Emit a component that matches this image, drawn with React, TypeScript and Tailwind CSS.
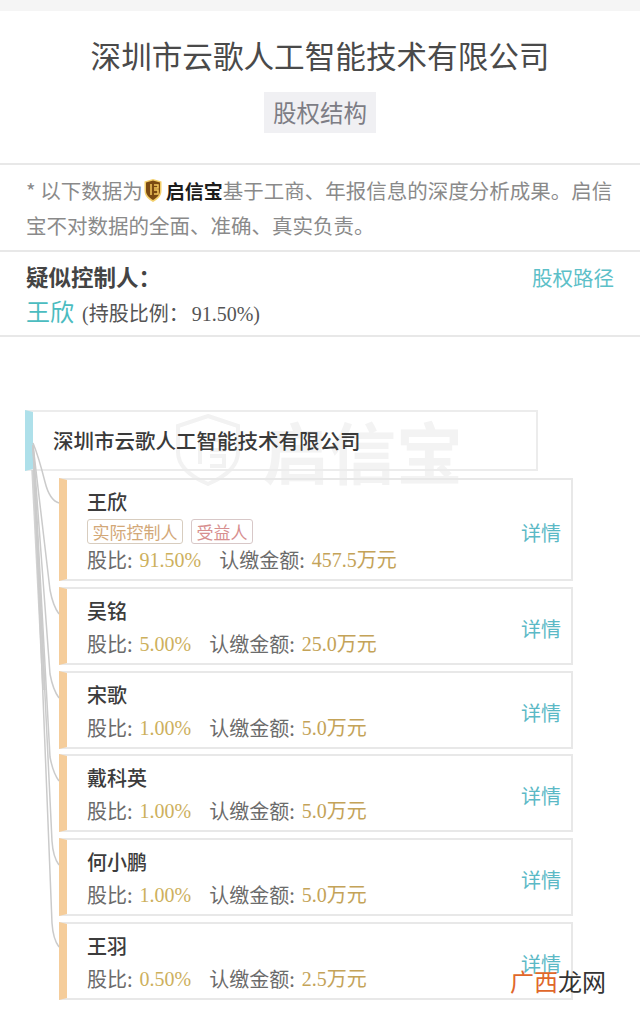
const cjk = "font-['Noto_Sans_CJK_SC','Noto_Sans',sans-serif]";

const holders = [
  {name: "王欣", ratio: "91.50%", amount: "457.5万元", tags: true, height: "h-[103px]", lineY: 503},
  {name: "吴铭", ratio: "5.00%", amount: "25.0万元", tags: false, height: "h-[78px]", lineY: 614},
  {name: "宋歌", ratio: "1.00%", amount: "5.0万元", tags: false, height: "h-[78px]", lineY: 698},
  {name: "戴科英", ratio: "1.00%", amount: "5.0万元", tags: false, height: "h-[78px]", lineY: 781},
  {name: "何小鹏", ratio: "1.00%", amount: "5.0万元", tags: false, height: "h-[78px]", lineY: 865},
  {name: "王羽", ratio: "0.50%", amount: "2.5万元", tags: false, height: "h-[78px]", lineY: 947}
];

const ShieldLogo = () => (
  <svg width="20" height="25" viewBox="0 0 20 25" className="shrink-0">
    <path d="M10 1 L18.5 3.5 V13 C18.5 18 14.500 21.500 10 24 C5.500 21.500 1.500 18 1.500 13 V3.500 Z" fill="#f3cf6b" />
    <path d="M10 2.500 L17 4.500 V13 C17 17 13.500 20 10 22 C6.500 20 3 17 3 13 V4.500 Z" fill="#7a4a12" />
    <path d="M8 6 V17 M11 7 H15 V10 H11 M11 12 H15 V16 H11" stroke="#f3c85e" strokeWidth="1.500" fill="none" />
  </svg>
);

const WatermarkLogo = () => (
  <div className="absolute left-[176px] top-[414px] flex items-center gap-[22px] text-[#f3f3f3]">
    <svg width="64" height="72" viewBox="0 0 64 72">
      <path d="M32 2 L62 12 V38 C62 54 46 64 32 70 C18 64 2 54 2 38 V12 Z" fill="none" stroke="#f2f2f2" strokeWidth="4" />
      <path d="M24 22 V50 M34 26 H48 V36 H34 M34 42 H48 V52 H34" fill="none" stroke="#f2f2f2" strokeWidth="4" />
    </svg>
    <span className="text-[67px] leading-[72px] font-bold">启信宝</span>
  </div>
);

const Connectors = () => (
  <svg className="absolute left-0 top-0" width="70" height="1009" fill="none" stroke="#cbcbcb" strokeWidth="1.500">
    <path d="M33 470 L44 690" strokeWidth="3.500" stroke="#d2d2d2" />
    {holders.map((h) =>
      h.lineY < 520 ? (
        <path key={h.name} d={`M33 443 C38 455 42 470 45 482 C48 494 52 501 59 ${h.lineY}`} />
      ) : (
        <path key={h.name} d={`M33 445 L${h.lineY > 800 ? 52 : 50} ${h.lineY - 24} Q53 ${h.lineY - 8} 59 ${h.lineY}`} />
      )
    )}
  </svg>
);

const App = () => {
  return (
    <div className={`relative w-[640px] h-[1009px] overflow-hidden bg-white ${cjk}`}>
      <div className="h-[11px] bg-[#f5f5f5]" />

      <div className="h-[154px] flex flex-col items-center border-b-2 border-[#e8e8e8]">
        <h1 className="mt-[24px] text-[30.600px] leading-[40px] text-[#4a4a4a] whitespace-nowrap">深圳市云歌人工智能技术有限公司</h1>
        <div className="mt-[17px] w-[112px] h-[41px] flex items-center justify-center bg-[#f0f0f3] text-[23.500px] text-[#7d7d85]">
          股权结构
        </div>
      </div>

      <div className="h-[87px] px-[26px] pt-[8px] border-b-2 border-[#e8e8e8] text-[20.500px] leading-[35px] text-[#8a8a8a]">
        <div className="flex items-center whitespace-nowrap">
          <span>* 以下数据为</span>
          <ShieldLogo />
          <span className="text-[#1c1c1c] font-bold text-[19px] ml-[3px]">启信宝</span>
          <span>基于工商、年报信息的深度分析成果。启信</span>
        </div>
        <div>宝不对数据的全面、准确、真实负责。</div>
      </div>

      <div className="h-[85px] px-[26px] pt-[7px] flex justify-between border-b-2 border-[#e8e8e8]">
        <div>
          <div className="text-[22.500px] leading-[34px] font-bold text-[#444444]">疑似控制人：</div>
          <div className="flex items-baseline">
            <span className="text-[24px] leading-[36px] text-[#4bbcc0]">王欣</span>
            <span className="ml-[8px] text-[20px] text-[#555555] font-['Liberation_Serif','Noto_Sans_CJK_SC',serif] whitespace-nowrap">
              (持股比例：<span className="ml-[3px]">91.50%)</span>
            </span>
          </div>
        </div>
        <span className="text-[20.500px] leading-[36px] text-[#5cc0c8]">股权路径</span>
      </div>

      <WatermarkLogo />

      <div className="relative mt-[73px] ml-[25px] w-[513px] h-[61px] flex items-center pl-[20px] border-2 border-l-[8px] border-[#ececec] border-l-[#aee0ea] text-[20.500px] font-medium text-[#3a3a3a]">
        深圳市云歌人工智能技术有限公司
      </div>

      <div className="relative mt-[7px] ml-[59px] w-[514px] flex flex-col gap-[5.800px]">
        {holders.map((h) => (
          <div
            key={h.name}
            className={`${h.height} flex items-center justify-between pl-[20px] pr-[10px] pt-[4px] border-2 border-l-[8px] border-[#e8e8e8] border-l-[#f5cd9b]`}
          >
            <div className="flex flex-col">
              <div className="text-[20px] leading-[30px] font-medium text-[#3c3c3c]">{h.name}</div>
              {h.tags && (
                <div className="flex gap-[8px] text-[17px] mt-[2px] mb-[-2px]">
                  <span className="w-[96px] h-[25px] flex items-center justify-center border border-[#d8cdbf] rounded-[3px] text-[#d3a878]">
                    实际控制人
                  </span>
                  <span className="w-[62px] h-[25px] flex items-center justify-center border border-[#d8c8c8] rounded-[3px] text-[#d78f8f]">
                    受益人
                  </span>
                </div>
              )}
              <div className="mt-[2px] flex items-center text-[20px] leading-[32px] text-[#6b6b6b] whitespace-nowrap">
                <span>股比:</span>
                <span className="ml-[7px] mr-[18px] text-[#cdb05c] font-['Liberation_Serif','Noto_Sans_CJK_SC',serif]">{h.ratio}</span>
                <span>认缴金额:</span>
                <span className="ml-[7px] text-[#c4a358] font-['Liberation_Serif','Noto_Sans_CJK_SC',serif]">{h.amount}</span>
              </div>
            </div>
            <span className={`${h.tags ? "mt-[3px]" : "mt-[2px]"} text-[20px] text-[#5bb9c6]`}>详情</span>
          </div>
        ))}
      </div>

      <Connectors />

      <div className="absolute left-[510px] top-[965px] text-[24px] leading-[32px]">
        <span className="text-[#e0672a]">广西</span>
        <span className="text-[#333333]">龙网</span>
      </div>
    </div>
  );
};

export default App;
